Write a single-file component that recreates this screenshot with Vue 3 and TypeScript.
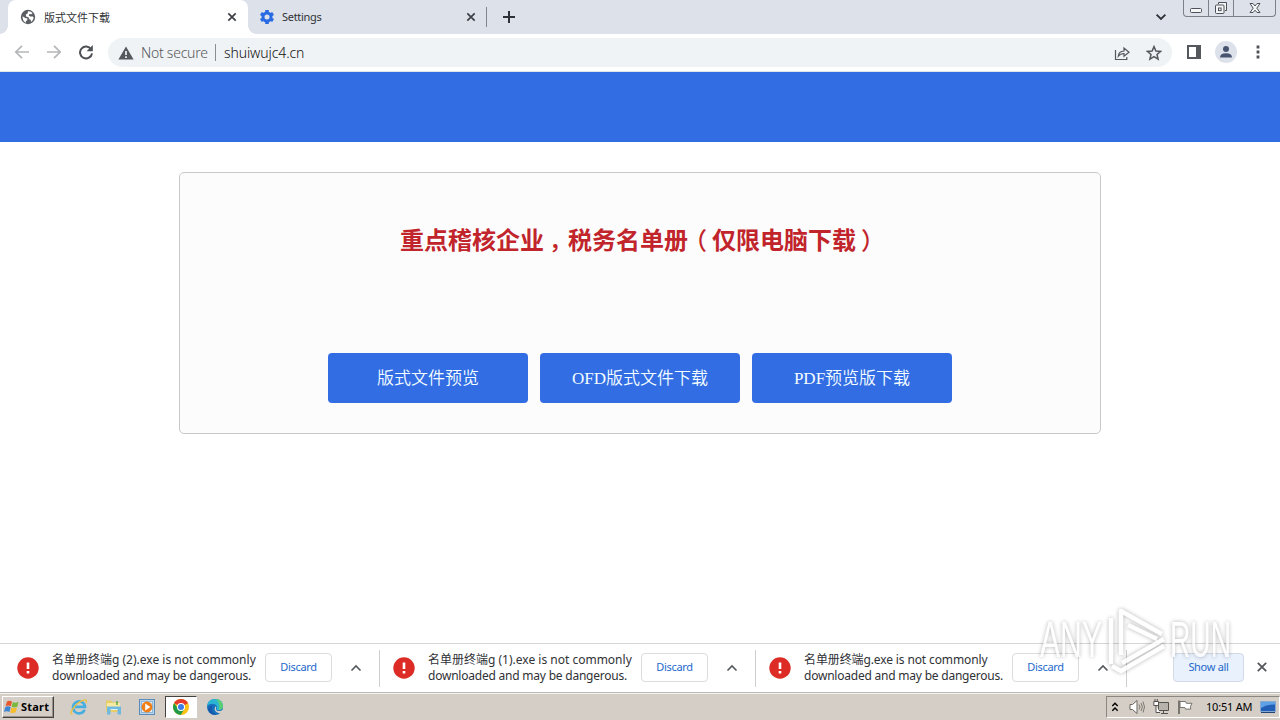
<template>
  <div class="screen">
    <header class="tab-strip">
      <div class="tab active">
        <svg class="favicon" viewBox="0 0 16 16">
          <circle cx="8" cy="8" r="7.2" fill="#5b5e62" />
          <path d="M2.6 7.2 L5.6 9.2 7.2 9.3 7.4 11 5.9 12.2 6 13.8 Q2.2 12 2.6 7.2Z M8 2.2 Q11 2 12.6 4.3 L11.2 5.2 9.5 5 8.8 6.7 10.4 7.5 12.8 7.4 13.7 8.6 Q13.4 11.6 11 13 L10.7 10.8 9 10 8.6 8.2 6 7.6 5.8 5.6 7.6 4.6Z" fill="#fff" />
        </svg>
        <span class="tab-title">{{ tabs[0] }}</span>
        <svg class="tab-close" viewBox="0 0 10 10"><path d="M1.3 1.3 8.7 8.7M8.7 1.3 1.3 8.7" /></svg>
      </div>
      <div class="tab">
        <svg class="favicon" viewBox="0 0 16 16">
          <circle cx="8" cy="8" r="4" fill="none" stroke="#2a6be4" stroke-width="3" />
          <g stroke="#2a6be4" stroke-width="3.6">
            <path d="M8 1v3M8 12v3M1.9 4.5l2.6 1.5M11.5 10l2.6 1.5M14.1 4.5 11.5 6M4.5 10l-2.6 1.5" />
          </g>
        </svg>
        <span class="tab-title">{{ tabs[1] }}</span>
        <svg class="tab-close" viewBox="0 0 10 10"><path d="M1.3 1.3 8.7 8.7M8.7 1.3 1.3 8.7" /></svg>
      </div>
      <svg class="new-tab" viewBox="0 0 12 12"><path d="M6 0v12M0 6h12" /></svg>
      <svg class="tab-search" viewBox="0 0 12 12"><path d="M1.6 3.6 6 8 10.4 3.6" /></svg>
      <div class="window-controls">
        <span class="wc"><svg width="14" height="16" viewBox="0 0 14 16"><rect x="1.5" y="8.5" width="11" height="4" rx="1" /></svg></span>
        <span class="wc"><svg width="14" height="16" viewBox="0 0 14 16"><path d="M4.5 4V2.5h8v8H11" /><rect x="1.5" y="5" width="8.5" height="8.5" rx="1" /><rect x="4.5" y="8" width="2.6" height="2.6" /></svg></span>
        <span class="wc wide"><svg width="14" height="16" viewBox="0 0 14 16"><path d="M2 3.5h3l2 2.5 2-2.5h3L8.8 8.2 12 12.5H9L7 10.2 5 12.5H2L5.2 8.2Z" /></svg></span>
      </div>
    </header>

    <div class="toolbar">
      <svg class="nav-icon dim" viewBox="0 0 16 16"><path d="M15 8H2M8 1.8 1.8 8 8 14.2" /></svg>
      <svg class="nav-icon dim" viewBox="0 0 16 16"><path d="M1 8h13M8 1.8 14.2 8 8 14.2" /></svg>
      <svg class="nav-icon reload" viewBox="0 0 16 16">
        <path d="M13.1 5.2A6 6 0 1 0 14 9.3" />
        <path d="M14.8 1v6.2H8.6Z" class="solid" />
      </svg>
      <div class="omnibox">
        <svg class="warn" viewBox="0 0 16 14">
          <path d="M8 .5 15.6 13.5H.4Z" fill="#55585c" />
          <path d="M8 5v4M8 10.3v1.7" stroke="#f1f3f4" stroke-width="1.7" />
        </svg>
        <span class="not-secure">Not secure</span>
        <span class="omni-divider"></span>
        <span class="url">{{ url }}</span>
        <svg class="share" viewBox="0 0 16 16">
          <path d="M1.5 5v9.5h11.3V12" />
          <path d="M4.3 11.2Q4.7 6.3 10 6V3l5 4.3-5 4V8.6Q6.5 8.3 4.3 11.2Z" />
        </svg>
        <svg class="star" viewBox="0 0 16 16"><path d="M8 1.6 9.9 6l4.7.4L11 9.5l1.1 4.7L8 11.7l-4.1 2.5L5 9.5 1.4 6.4 6.1 6Z" /></svg>
      </div>
      <svg class="side-panel" viewBox="0 0 14 14"><path d="M1 1h12v12H1Z" fill="none" stroke="#54575b" stroke-width="2" /><path d="M9 1h4v12H9Z" fill="#54575b" /></svg>
      <span class="avatar">
        <svg viewBox="0 0 14 14"><circle cx="7" cy="4" r="3" /><path d="M1 12.6Q1 8.3 7 8.3T13 12.6Z" /></svg>
      </span>
      <svg class="kebab" viewBox="0 0 4 14"><path d="M.6.6h2.8v2.8H.6ZM.6 5.6h2.8v2.8H.6ZM.6 10.6h2.8v2.8H.6Z" /></svg>
    </div>

    <main class="page">
      <div class="banner"></div>
      <section class="card">
        <h1>重点稽核企业<span class="comma">，</span>税务名单册<span class="open">（</span>仅限电脑下载<span class="close">）</span></h1>
        <div class="actions">
          <button v-for="action in actions" :key="action">{{ action }}</button>
        </div>
      </section>
    </main>

    <div class="downloads">
      <div v-for="item in downloads" :key="item.name" class="download" :class="item.size">
        <svg class="danger" viewBox="0 0 22 22">
          <circle cx="11" cy="11" r="10.7" fill="#dc2c25" />
          <path d="M11 5.5v6.5M11 14v2.6" stroke="#fff" stroke-width="2.6" />
        </svg>
        <div class="message">
          <div class="line">名单册终端{{ item.name }} is not commonly</div>
          <div class="line second">downloaded and may be dangerous.</div>
        </div>
        <button class="discard">Discard</button>
        <svg class="chevron" viewBox="0 0 12 12"><path d="M1.5 8.5 6 4l4.5 4.5" /></svg>
      </div>
      <button class="show-all">Show all</button>
      <svg class="bar-close" viewBox="0 0 10 10"><path d="M.8.8 9.2 9.2M9.2.8.8 9.2" /></svg>
    </div>

    <footer class="taskbar">
      <div class="start">
        <svg viewBox="0 0 16 16">
          <path d="M3 2.5Q5.5.8 8 2.6L6.9 7.3Q4.4 5.7 1.6 7.2Z" fill="#e8572a" />
          <path d="M8.8 3Q11.4 4.5 14.6 2.8L13.3 7.7Q10.4 9.2 7.7 7.7Z" fill="#7cb83c" />
          <path d="M1.4 8Q4.2 6.6 6.7 8.2L5.4 13Q3 11.4 0 12.8Z" fill="#3c86d4" />
          <path d="M7.5 8.6Q10.2 10.1 13 8.6L11.8 13.3Q9 14.8 6.2 13.4Z" fill="#f5bd2a" />
        </svg>
        <span>Start</span>
      </div>
      <div class="task">
        <svg viewBox="0 0 18 18">
          <path d="M14.6 11.7A6 6 0 1 1 15 8.8H5" fill="none" stroke="#48aee0" stroke-width="2.7" />
          <path d="M2.5 15.8Q-.2 16.2 2.2 11.8 6.4 4.8 13 2.3 17.8.8 16 5" fill="none" stroke="#ecc13c" stroke-width="1.4" />
        </svg>
      </div>
      <div class="task">
        <svg viewBox="0 0 18 18">
          <path d="M2 2.5h5l1.4 1.8H15V14H2Z" fill="#e8cd67" />
          <path d="M3 5h13v7H3Z" fill="#f8e9a3" />
          <path d="M3 8.5h14v8h-3.5V12h-7v4.5H3Z" fill="#70b9df" />
          <path d="M6.5 11.5h7" stroke="#d8f1fc" />
          <path d="M13 3v4" stroke="#4ca84c" stroke-width="1.4" />
        </svg>
      </div>
      <div class="task">
        <svg viewBox="0 0 18 18">
          <rect x="1.5" y="1.5" width="15" height="15" fill="#b9d5ec" stroke="#5b8bb9" />
          <rect x="3.5" y="3.5" width="11" height="11" fill="#e3eff8" stroke="#8fb6d6" />
          <circle cx="9" cy="9" r="5.4" fill="#f17d16" />
          <path d="M7.2 5.6 12.4 9l-5.2 3.4Z" fill="#fff" />
        </svg>
      </div>
      <div class="task current">
        <svg viewBox="0 0 18 18">
          <circle cx="9" cy="9" r="8" fill="#fbc116" />
          <path d="M9 9 2.1 5A8 8 0 0 1 15.9 5Z" fill="#e33b2e" />
          <path d="M2.1 5A8 8 0 0 0 8.7 17L12.3 11 9 9 6 10.7Z" fill="#229b48" />
          <path d="M9 5h6.9L9 9Z" fill="#e33b2e" />
          <circle cx="9" cy="9" r="4" fill="#fff" />
          <circle cx="9" cy="9" r="3" fill="#3b7de8" />
        </svg>
      </div>
      <div class="task">
        <svg viewBox="0 0 18 18">
          <circle cx="9" cy="9" r="8" fill="#1670bd" />
          <path d="M1.1 8Q2 1 9 1q8 .4 8 7.5-.4 3.7-4.3 3.7-2.6-.1-2.2-1.3Q12 8.5 9.3 6.6 5 4.4 1.1 8Z" fill="#2cb5d3" />
          <path d="M10 1.1q6.7.9 7 7-.3 3.8-4.3 3.9Q15 6.5 10 1.1Z" fill="#5bcf74" />
          <path d="M10.2 9.4q-1 2 .5 3 2.6 1.2 6.3-.4l1 2-3.4 1.4Q9.6 15 8.6 11.6 8.6 9 10 8Z" fill="#d5cec7" />
          <path d="M6 9.5Q5.3 15 11 16.7 3.5 17.5 2 11 3 7.7 7.6 7.7 6.4 8.4 6 9.5Z" fill="#1659ac" />
        </svg>
      </div>
      <div class="tray">
        <svg class="tray-up" viewBox="0 0 8 12"><path d="M1.3 5 4 2.2 6.7 5M1.3 9.7 4 6.9 6.7 9.7" /></svg>
        <svg class="tray-icon" viewBox="0 0 16 16">
          <path d="M1 5.5h2.5L8 1.5v13L3.5 10.5H1Z" fill="#fff" stroke="#68645f" />
          <path d="M10 5.5Q12 8 10 10.5M12 4Q14.8 8 12 12M14 2.5Q17 8 14 13.5" fill="none" stroke="#7b7771" />
        </svg>
        <svg class="tray-icon" viewBox="0 0 16 16">
          <path d="M5.5 3.5h10v8h-10ZM8 14.5h7M10.5 12v2" fill="#b6b3ad" stroke="#55524e" />
          <path d="M.8 2.5h4.7v4H.8ZM2 0v2.5M4.3 0v2.5M3 6.5v7h4" fill="#fff" stroke="#55524e" />
        </svg>
        <svg class="tray-icon" viewBox="0 0 16 16">
          <path d="M2 1.5V15" stroke="#625f5b" stroke-width="1.6" />
          <path d="M3 2.5h5.5l.8 1.8H15l-1.5 3 .2 2.8H8.5L7.8 8.5H3Z" fill="#fff" stroke="#77736e" />
        </svg>
        <span class="clock">10:51 AM</span>
        <svg class="desktop" viewBox="0 0 16 14">
          <path d="M.5 1.5h15v10H.5Z" fill="#2260b8" stroke="#86a8d3" />
          <path d="M1 2h14v2.5Q7 4 1 8Z" fill="#5fa1e5" />
          <path d="M1 12.5h14" stroke="#244474" />
        </svg>
      </div>
    </footer>

    <svg class="watermark" viewBox="0 0 210 76">
      <text x="10" y="54" textLength="62" lengthAdjust="spacingAndGlyphs">ANY</text>
      <path d="M81 61V15M91 52V8L132 31M134 36 92 60M82 63l9 5 43-25M98 22l29 14" />
      <text x="140" y="54" textLength="61" lengthAdjust="spacingAndGlyphs">RUN</text>
    </svg>
  </div>
</template>

<script setup lang="ts">
interface DownloadItem {
  name: string;
  size: string;
}

const tabs = ['版式文件下载', 'Settings'];
const url = 'shuiwujc4.cn';
const actions = ['版式文件预览', 'OFD版式文件下载', 'PDF预览版下载'];

const downloads: DownloadItem[] = [
  { name: 'g (2).exe', size: 'first' },
  { name: 'g (1).exe', size: 'middle' },
  { name: 'g.exe', size: 'last' },
];
</script>

<style>
body {
  overflow: hidden;
}
</style>

<style scoped>
* {
  box-sizing: border-box;
}
svg {
  flex: none;
  display: block;
}
.screen {
  position: relative;
  display: flex;
  flex-direction: column;
  width: 1280px;
  height: 720px;
  background: #fff;
  font-family: "Noto Sans", "Noto Sans CJK SC", sans-serif;
  color: #303236;
}
.tab-strip {
  display: flex;
  align-items: center;
  height: 34px;
  padding-left: 8px;
  background: #dde1e9;
  flex: none;
}
.tab {
  display: flex;
  align-items: center;
  width: 239px;
  height: 34px;
  padding: 0 10px 0 11px;
  font-size: 11px;
  border-right: 1px solid transparent;
}
.tab:not(.active) {
  height: 20px;
  border-right-color: #80858d;
}
.tab:not(.active) .tab-title {
  letter-spacing: -0.3px;
}
.tab.active {
  position: relative;
  width: 240px;
  padding-left: 12px;
  background: #fff;
  border-radius: 8px 8px 0 0;
}
.tab.active::before,
.tab.active::after {
  content: "";
  position: absolute;
  bottom: 0;
  width: 8px;
  height: 8px;
}
.tab.active::before {
  left: -8px;
  background: radial-gradient(circle at 0 0, transparent 7.5px, #fff 8px);
}
.tab.active::after {
  right: -9px;
  background: radial-gradient(circle at 100% 0, transparent 7.5px, #fff 8px);
}
.favicon {
  width: 16px;
  height: 16px;
}
.tab-title {
  flex: 1;
  margin-left: 7px;
  padding-bottom: 1px;
  white-space: nowrap;
}
.tab.active .tab-title {
  margin-left: 8px;
}
.tab-close {
  width: 10px;
  height: 10px;
  stroke: #3d4045;
  stroke-width: 1.7;
}
.new-tab {
  width: 12px;
  height: 12px;
  margin-left: 16px;
  stroke: #2e3136;
  stroke-width: 2;
}
.tab-search {
  width: 12px;
  height: 12px;
  margin-left: auto;
  fill: none;
  stroke: #2e3136;
  stroke-width: 1.8;
}
.window-controls {
  display: flex;
  align-self: flex-start;
  height: 17px;
  margin: 0 4px 0 16px;
  border: 1px solid #7c8088;
  border-top: none;
  border-radius: 0 0 4px 4px;
}
.wc {
  display: flex;
  justify-content: center;
  width: 25px;
  border-right: 1px solid #7c8088;
}
.wc.wide {
  width: 41px;
  border-right: none;
}
.wc svg {
  fill: #f5f6f8;
  stroke: #4e5157;
}
.toolbar {
  display: flex;
  align-items: center;
  height: 38px;
  padding: 0 20px 0 14px;
  border-bottom: 1px solid #dfe6e6;
  flex: none;
}
.nav-icon {
  width: 16px;
  height: 16px;
  margin: 0 16px 2px 0;
  fill: none;
  stroke: #4d5054;
  stroke-width: 2;
}
.nav-icon.dim {
  stroke: #b4b6b9;
  stroke-width: 1.7;
}
.nav-icon .solid {
  fill: #4d5054;
  stroke: none;
}
.omnibox {
  display: flex;
  align-items: center;
  width: 1064px;
  height: 29px;
  margin-left: -2px;
  padding: 0 10px;
  border-radius: 15px;
  background: #f0f3f5;
  font-size: 14px;
  font-weight: 300;
}
.warn {
  width: 16px;
  height: 14px;
}
.not-secure {
  width: 74px;
  margin-left: 7px;
  color: #55585c;
  letter-spacing: -0.25px;
  white-space: nowrap;
}
.omni-divider {
  width: 1px;
  height: 17px;
  background: #8b8e91;
}
.url {
  margin-left: 8px;
  color: #111;
  letter-spacing: -0.1px;
}
.share {
  width: 16px;
  height: 16px;
  margin-left: auto;
  fill: none;
  stroke: #54575b;
  stroke-width: 1.2;
}
.star {
  width: 16px;
  height: 16px;
  margin-left: 16px;
  fill: none;
  stroke: #54575b;
  stroke-width: 1.5;
}
.side-panel {
  width: 14px;
  height: 14px;
  margin: 0 0 2px 15px;
}
.avatar {
  display: flex;
  align-items: center;
  justify-content: center;
  width: 22px;
  height: 22px;
  margin: 0 0 2px 14px;
  border-radius: 50%;
  background: #dde1e9;
}
.avatar svg {
  width: 14px;
  height: 14px;
  fill: #48536f;
}
.kebab {
  width: 4px;
  height: 14px;
  margin: 0 0 1px auto;
  fill: #4d5054;
}
.page {
  display: flex;
  flex-direction: column;
  align-items: center;
  height: 571px;
  flex: none;
}
.banner {
  width: 100%;
  height: 70px;
  background: #326de4;
}
.card {
  display: flex;
  flex-direction: column;
  align-items: center;
  justify-content: space-between;
  width: 922px;
  height: 262px;
  margin-top: 30px;
  padding: 48px 0 30px;
  border: 1px solid #c8c8c8;
  border-radius: 5px;
  background: #fcfcfc;
}
.card h1 {
  margin: 0;
  font-family: "Noto Sans CJK SC", sans-serif;
  font-size: 24px;
  font-weight: 700;
  line-height: 36px;
  color: #c1242b;
}
/* full-width punctuation sits in the middle of its cell */
.comma,
.open,
.close {
  position: relative;
  font-weight: 500;
}
.comma,
.close {
  left: 5px;
}
.open {
  left: -5px;
}
.actions {
  display: flex;
  gap: 12px;
}
.actions button {
  width: 200px;
  height: 50px;
  padding: 0 0 3px;
  border: none;
  border-radius: 4px;
  background: #326de4;
  color: #f4fdff;
  font-family: "Liberation Serif", "Noto Sans CJK SC", serif;
  font-size: 17px;
  font-weight: 350;
}
.downloads {
  display: flex;
  align-items: center;
  height: 50px;
  padding-right: 13px;
  border-top: 1px solid #d6d6d6;
  border-bottom: 1px solid #bdbbb7;
  flex: none;
}
.download {
  display: flex;
  align-items: center;
  width: 376px;
  height: 37px;
  padding-left: 13px;
  border-right: 1px solid #cfcfcf;
}
.download.first {
  width: 380px;
  padding-left: 17px;
}
.download.last {
  width: 371px;
}
.danger {
  width: 22px;
  height: 22px;
}
.message {
  width: 213px;
  margin-left: 13px;
  padding-bottom: 1px;
  font-size: 12px;
  line-height: 16px;
  white-space: nowrap;
}
.last .message {
  width: 208px;
}
.last .line:first-child {
  letter-spacing: -0.12px;
}
.line.second {
  letter-spacing: -0.22px;
}
.downloads button {
  margin-bottom: 1px;
  padding: 0 0 2px;
  height: 29px;
  border: 1px solid #dadce0;
  border-radius: 4px;
  background: #fff;
  color: #2469cb;
  font-family: inherit;
  font-size: 11px;
  letter-spacing: -0.3px;
  white-space: nowrap;
}
.downloads .discard {
  width: 67px;
}
.chevron {
  width: 12px;
  height: 12px;
  margin-left: 18px;
  fill: none;
  stroke: #54575b;
  stroke-width: 1.6;
}
.downloads .show-all {
  width: 71px;
  margin-left: auto;
  background: #e9f1fd;
  border-color: #d3dae5;
}
.bar-close {
  width: 10px;
  height: 10px;
  margin: 0 0 2px 13px;
  stroke: #54575b;
  stroke-width: 1.8;
}
.taskbar {
  display: flex;
  align-items: center;
  height: 27px;
  padding-left: 2px;
  border-top: 1px solid #f5f3ef;
  background: #d5cec7;
  flex: none;
}
.start {
  display: flex;
  align-items: center;
  gap: 1px;
  width: 52px;
  height: 22px;
  margin-right: 9px;
  padding-left: 1px;
  border: 1px solid;
  border-color: #fff #45423f #45423f #fff;
  box-shadow: inset -1px -1px #96918b;
  font-size: 11px;
  font-weight: 700;
  color: #000;
}
.start span {
  padding-bottom: 1px;
  letter-spacing: 0.2px;
}
.start svg {
  width: 16px;
  height: 16px;
}
.task {
  display: flex;
  align-items: center;
  justify-content: center;
  width: 32px;
  height: 22px;
  margin-right: 2px;
}
.task svg {
  width: 18px;
  height: 18px;
}
.task.current {
  background: #fff;
  border: 1px solid;
  border-color: #45423f #fff #fff #45423f;
}
.tray {
  display: flex;
  align-items: center;
  width: 174px;
  height: 22px;
  margin-left: auto;
  padding-left: 4px;
  border: 1px solid;
  border-color: #8b867f #fff #fff #8b867f;
}
.tray-up {
  width: 8px;
  height: 12px;
  margin-bottom: 1px;
  fill: none;
  stroke: #000;
  stroke-width: 1.4;
}
.tray-icon {
  width: 16px;
  height: 16px;
  margin-left: 8px;
}
.tray-up + .tray-icon {
  margin-left: 10px;
}
.clock {
  width: 47px;
  margin: 0 0 1px 13px;
  font-size: 11px;
  letter-spacing: -0.2px;
  color: #000;
  white-space: nowrap;
}
.desktop {
  width: 16px;
  height: 14px;
  margin-left: 7px;
}
/* floats over the page and the download shelf */
.watermark {
  position: absolute;
  left: 1030px;
  top: 603px;
  width: 210px;
  height: 76px;
  overflow: visible;
  opacity: 0.75;
  filter: drop-shadow(0 0 2px rgba(0, 0, 0, 0.4));
  font-family: "Liberation Sans", sans-serif;
  font-size: 50px;
  pointer-events: none;
}
.watermark text {
  fill: #fff;
}
.watermark path {
  fill: none;
  stroke: #fff;
  stroke-width: 4.5;
  stroke-linejoin: round;
}
</style>
